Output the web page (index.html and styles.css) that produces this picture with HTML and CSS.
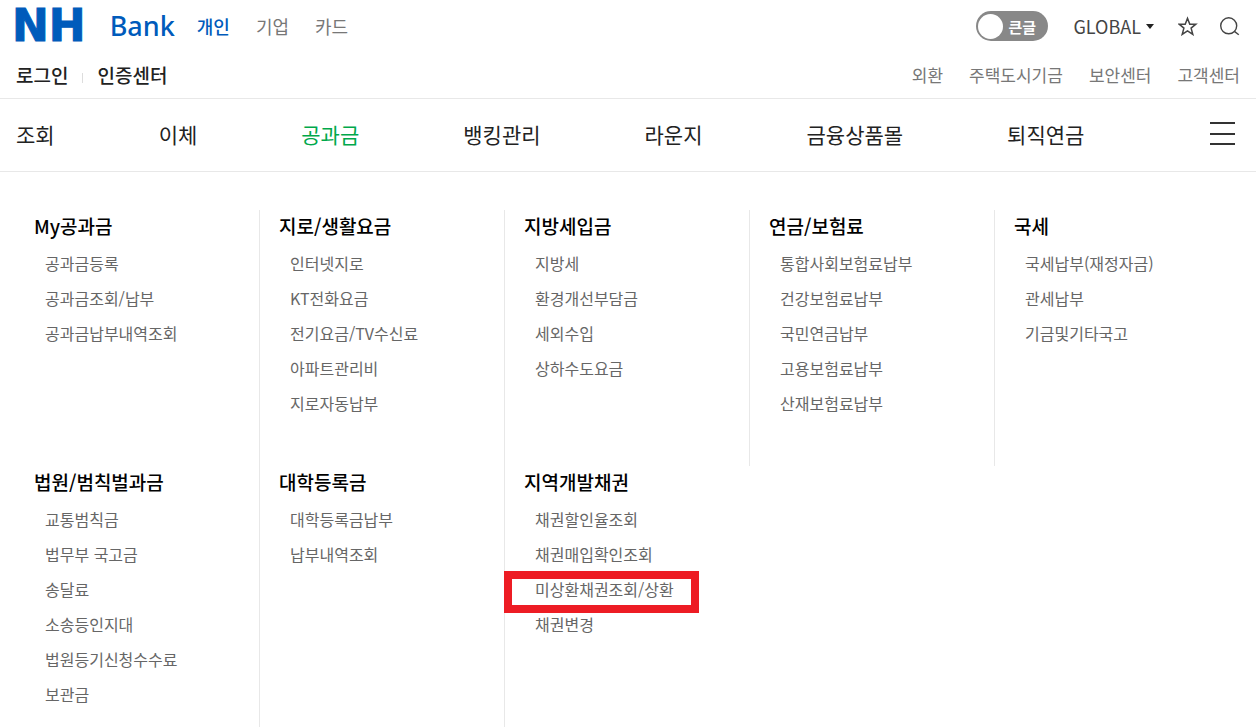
FILE: index.html
```
<!DOCTYPE html>
<html lang="ko">
<head>
    <meta charset="UTF-8">
    <meta name="viewport" content="width=device-width, initial-scale=1.0">
    <title>NH Bank</title>
    <link rel="stylesheet" href="styles.css">
</head>
<body>
    <header>
        <div class="top">
            <a class="logo" href="#"><span class="logo-nh">NH</span><span class="logo-bank">Bank</span></a>
            <nav class="sites">
                <a class="on" href="#">개인</a>
                <a href="#">기업</a>
                <a href="#">카드</a>
            </nav>
            <div class="tools">
                <label class="zoom"><input type="checkbox"><span>큰글</span></label>
                <button class="global" type="button">GLOBAL <span class="caret"></span></button>
                <button class="icon" type="button" aria-label="즐겨찾기">
                    <svg width="20" height="20" viewBox="0 0 20 20" fill="none" stroke="#444" stroke-width="1.5">
                        <path d="M9.5 2.4l2.3 5.8h6l-4.7 3.9 1.7 6.3-5.3-3.5-5.3 3.5 1.7-6.3L1.2 8.2h6z"/>
                    </svg>
                </button>
                <button class="icon" type="button" aria-label="검색">
                    <svg width="20" height="20" viewBox="0 0 20 20" fill="none" stroke="#444" stroke-width="1.4">
                        <circle cx="8.7" cy="9.8" r="8"/>
                        <path d="M14.4 15.4l4.4 3.4"/>
                    </svg>
                </button>
            </div>
        </div>
        <div class="util">
            <div class="login">
                <a href="#">로그인</a>
                <a href="#">인증센터</a>
            </div>
            <div class="links">
                <a href="#">외환</a>
                <a href="#">주택도시기금</a>
                <a href="#">보안센터</a>
                <a href="#">고객센터</a>
            </div>
        </div>
    </header>

    <nav class="gnb">
        <a href="#">조회</a>
        <a href="#">이체</a>
        <a class="on" href="#">공과금</a>
        <a href="#">뱅킹관리</a>
        <a href="#">라운지</a>
        <a href="#">금융상품몰</a>
        <a href="#">퇴직연금</a>
        <button class="all-menu" type="button" aria-label="전체메뉴">
            <svg width="25" height="24" viewBox="0 0 25 24" fill="#333">
                <rect width="25" height="2"/>
                <rect y="11" width="25" height="2"/>
                <rect y="21" width="25" height="2"/>
            </svg>
        </button>
    </nav>

    <main class="submenu">
        <section>
            <h2>My공과금</h2>
            <ul>
                <li><a href="#">공과금등록</a></li>
                <li><a href="#">공과금조회/납부</a></li>
                <li><a href="#">공과금납부내역조회</a></li>
            </ul>
        </section>
        <section>
            <h2>지로/생활요금</h2>
            <ul>
                <li><a href="#">인터넷지로</a></li>
                <li><a href="#">KT전화요금</a></li>
                <li><a href="#">전기요금/TV수신료</a></li>
                <li><a href="#">아파트관리비</a></li>
                <li><a href="#">지로자동납부</a></li>
            </ul>
        </section>
        <section>
            <h2>지방세입금</h2>
            <ul>
                <li><a href="#">지방세</a></li>
                <li><a href="#">환경개선부담금</a></li>
                <li><a href="#">세외수입</a></li>
                <li><a href="#">상하수도요금</a></li>
            </ul>
        </section>
        <section>
            <h2>연금/보험료</h2>
            <ul>
                <li><a href="#">통합사회보험료납부</a></li>
                <li><a href="#">건강보험료납부</a></li>
                <li><a href="#">국민연금납부</a></li>
                <li><a href="#">고용보험료납부</a></li>
                <li><a href="#">산재보험료납부</a></li>
            </ul>
        </section>
        <section>
            <h2>국세</h2>
            <ul>
                <li><a href="#">국세납부(재정자금)</a></li>
                <li><a href="#">관세납부</a></li>
                <li><a href="#">기금및기타국고</a></li>
            </ul>
        </section>
        <section>
            <h2>법원/범칙벌과금</h2>
            <ul>
                <li><a href="#">교통범칙금</a></li>
                <li><a href="#">법무부 국고금</a></li>
                <li><a href="#">송달료</a></li>
                <li><a href="#">소송등인지대</a></li>
                <li><a href="#">법원등기신청수수료</a></li>
                <li><a href="#">보관금</a></li>
            </ul>
        </section>
        <section>
            <h2>대학등록금</h2>
            <ul>
                <li><a href="#">대학등록금납부</a></li>
                <li><a href="#">납부내역조회</a></li>
            </ul>
        </section>
        <section>
            <h2>지역개발채권</h2>
            <ul>
                <li><a href="#">채권할인율조회</a></li>
                <li><a href="#">채권매입확인조회</a></li>
                <li class="marked"><a href="#">미상환채권조회/상환</a></li>
                <li><a href="#">채권변경</a></li>
            </ul>
        </section>
    </main>
</body>
</html>
```
FILE: styles.css
```
*,
*::before,
*::after {
    box-sizing: border-box;
}
body {
    margin: 0;
    background: #fff;
    color: #222;
    font-family: "Noto Sans CJK KR", sans-serif;
    font-size: 16px;
}
a {
    color: inherit;
    text-decoration: none;
    white-space: nowrap;
}
button {
    padding: 0;
    border: none;
    background: none;
    color: inherit;
    font: inherit;
    cursor: pointer;
}
svg {
    display: block;
}
header {
    border-bottom: 1px solid #e8e8e8;
}
.top {
    display: flex;
    align-items: center;
    height: 52px;
    padding: 0 16px 0 12px;
}
.logo {
    display: flex;
    align-items: center;
    gap: 24px;
    color: #005bbb;
    line-height: 52px;
}
.logo-nh {
    font-family: "DejaVu Sans", sans-serif;
    font-size: 44px;
    font-weight: bold;
    -webkit-text-stroke: 1px #005bbb;
}
.logo-bank {
    font-family: "Noto Sans", sans-serif;
    font-size: 27px;
    font-weight: 500;
}
.sites {
    display: flex;
    gap: 26px;
    margin-left: 22px;
    font-size: 18px;
    color: #777;
}
.sites .on {
    color: #005bbb;
    font-weight: 500;
}
.tools {
    display: flex;
    align-items: center;
    margin-left: auto;
}
.zoom {
    display: flex;
    align-items: center;
    gap: 5px;
    width: 72px;
    height: 30px;
    padding: 0 2px;
    border-radius: 15px;
    background: #888;
    color: #fff;
    font-size: 15px;
    font-weight: bold;
    white-space: nowrap;
    cursor: pointer;
}
.zoom input {
    appearance: none;
    flex: none;
    width: 25px;
    height: 25px;
    margin: 0;
    border-radius: 50%;
    background: #fff;
}
.global {
    display: flex;
    align-items: center;
    gap: 5px;
    margin: 0 24px 0 25px;
    font-size: 18px;
    color: #444;
}
.caret {
    border: 4px solid transparent;
    border-top: 5px solid #222;
    border-bottom: none;
}
.icon + .icon {
    margin-left: 22px;
}
.util {
    display: flex;
    justify-content: space-between;
    align-items: center;
    height: 46px;
    padding: 0 16px 2px;
}
.login {
    display: flex;
    align-items: center;
    font-size: 19px;
    font-weight: 500;
}
.login a + a::before {
    content: "";
    display: inline-block;
    width: 1px;
    height: 10px;
    margin: 0 14px;
    background: #ddd;
}
.links {
    display: flex;
    gap: 26px;
    font-size: 17px;
    color: #777;
}
.gnb {
    display: flex;
    align-items: center;
    gap: 104px;
    height: 73px;
    padding: 0 21px 2px 16px;
    border-bottom: 1px solid #e8e8e8;
    font-size: 21px;
}
.gnb .on {
    color: #00a84b;
}
.all-menu {
    margin-left: auto;
}
.submenu {
    display: grid;
    grid-template-columns: repeat(5, 1fr);
    padding: 38px 16px 0 15px;
}
.submenu section {
    padding: 0 0 45px 19px;
    border-right: 1px solid #e8e8e8;
}
.submenu section:nth-child(5),
.submenu section:last-child {
    border-right: none;
}
.submenu section:nth-child(n+6) {
    padding-bottom: 15px;
}
h2 {
    margin: 0 0 4px;
    color: #000;
    font-size: 19px;
    font-weight: 500;
    line-height: 32px;
}
ul {
    margin: 0;
    padding: 0 0 0 11px;
    list-style: none;
}
li {
    color: #666;
    line-height: 35px;
}
.marked {
    position: relative;
}
/* red frame over the menu item */
.marked::after {
    content: "";
    position: absolute;
    top: -1px;
    left: -31px;
    width: 195px;
    height: 42px;
    border: 8px solid #ed1c24;
    pointer-events: none;
}
```
